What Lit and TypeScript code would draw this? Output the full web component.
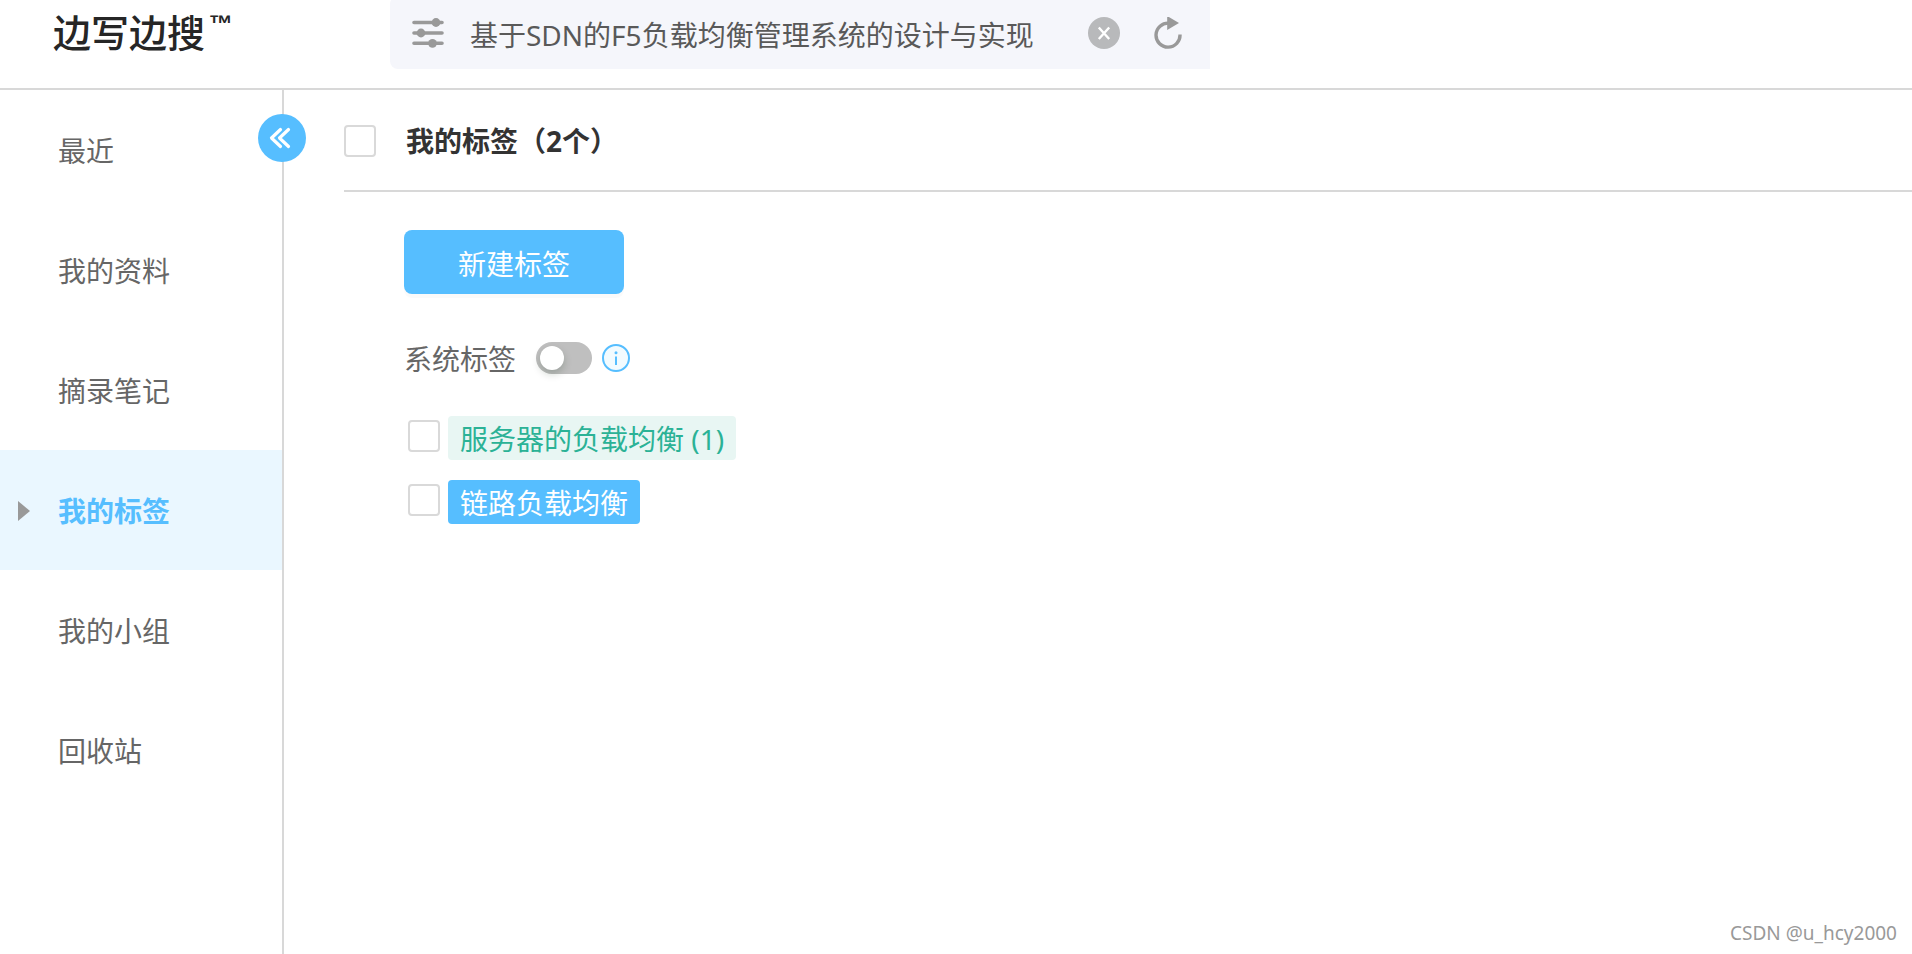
import { LitElement, html, css, svg } from "lit";
import { customElement, state } from "lit/decorators.js";

interface Tag {
  id: string;
  label: string;
  tone: "green" | "blue";
}

@customElement("app-root")
export class AppRoot extends LitElement {
  static styles = css`
    :host {
      display: flex;
      flex-direction: column;
      min-height: 100vh;
      background: #fff;
      color: #595959;
      font-family: "Noto Sans", "Noto Sans CJK SC", sans-serif;
      font-size: 28px;
      line-height: 40px;
    }
    * {
      box-sizing: border-box;
    }
    svg {
      display: block;
    }
    button {
      border: 0;
      padding: 0;
      background: none;
      font: inherit;
      color: inherit;
      cursor: pointer;
    }
    .top {
      display: flex;
      align-items: flex-start;
      height: 90px;
      border-bottom: 2px solid #d8d8d8;
    }
    .logo {
      display: flex;
      align-items: flex-start;
      gap: 4px;
      width: 390px;
      flex: none;
      margin: 0;
      padding: 8px 0 0 53px;
      color: #262626;
      font-size: 38px;
      line-height: 48px;
      font-weight: 500;
    }
    .logo sup {
      font-family: "Liberation Sans", sans-serif;
      font-size: 24px;
      line-height: 32px;
      font-weight: 700;
    }
    .search {
      display: flex;
      align-items: center;
      width: 820px;
      height: 73px;
      margin-top: -4px;
      padding: 0 28px 0 22px;
      background: #f5f6fb;
      border-radius: 8px 0 0 8px;
    }
    .search input {
      flex: 1;
      min-width: 0;
      height: 48px;
      margin-left: 26px;
      padding: 2px 0 0;
      border: 0;
      outline: 0;
      background: none;
      color: #595959;
      font: inherit;
    }
    .clear {
      margin-right: 34px;
    }
    .body {
      display: flex;
      flex: 1;
    }
    .side {
      position: relative;
      flex: none;
      width: 284px;
      border-right: 2px solid #d8d8d8;
    }
    .side a {
      display: flex;
      align-items: center;
      height: 120px;
      padding: 2px 0 0 18px;
      color: #666;
      text-decoration: none;
    }
    .side .mark {
      width: 40px;
    }
    .side a.active {
      background: #eaf7ff;
      color: #56beff;
      font-weight: 700;
    }
    .fold {
      position: absolute;
      top: 24px;
      right: -24px;
      width: 48px;
      height: 48px;
      border-radius: 50%;
      background: #56beff;
    }
    .main {
      flex: 1;
      min-width: 0;
      padding-left: 60px;
    }
    .box {
      appearance: none;
      flex: none;
      width: 32px;
      height: 32px;
      margin: 0;
      border: 2px solid #d9d9d9;
      border-radius: 4px;
      background: #fff;
    }
    .box:checked {
      border-color: #56beff;
      background: #56beff;
    }
    .heading {
      display: flex;
      align-items: center;
      gap: 30px;
      height: 102px;
      padding-top: 2px;
      border-bottom: 2px solid #d8d8d8;
    }
    .heading label {
      color: #333;
      font-weight: 700;
    }
    .content {
      display: flex;
      flex-direction: column;
      align-items: flex-start;
      padding: 38px 60px 60px;
    }
    .create {
      width: 220px;
      height: 64px;
      border-radius: 8px;
      background: #56beff;
      color: #fff;
      padding-top: 4px;
      box-shadow: 0 4px 0 rgba(0, 0, 0, 0.02);
    }
    .system {
      display: flex;
      align-items: center;
      height: 48px;
      margin: 40px 0 34px;
      color: #666;
    }
    .system label {
      padding-top: 2px;
    }
    .switch {
      appearance: none;
      width: 56px;
      height: 32px;
      margin: 0 10px 0 20px;
      padding: 4px;
      border-radius: 16px;
      background: #bfbfbf;
      cursor: pointer;
    }
    .switch::before {
      content: "";
      display: block;
      width: 24px;
      height: 24px;
      border-radius: 50%;
      background: #fff;
      box-shadow: 0 4px 8px rgba(0, 35, 11, 0.2);
    }
    .switch:checked {
      background: #56beff;
    }
    .switch:checked::before {
      margin-left: 24px;
    }
    .tags {
      display: flex;
      flex-direction: column;
      gap: 20px;
      margin: 0;
      padding: 0 0 0 4px;
      list-style: none;
    }
    .tags li {
      display: flex;
      align-items: center;
      gap: 8px;
    }
    .tags .box {
      margin-bottom: 4px;
    }
    .tag {
      height: 44px;
      padding: 3px 12px 0;
      border-radius: 4px;
    }
    .green {
      background: #e8f6f3;
      color: #2bb296;
    }
    .blue {
      background: #56beff;
      color: #fff;
    }
    .credit {
      position: absolute;
      right: 15px;
      bottom: 7px;
      color: #999;
      font-size: 19px;
      line-height: 28px;
    }
  `;

  @state() private query = "基于SDN的F5负载均衡管理系统的设计与实现";
  @state() private current = "我的标签";

  private sections = ["最近", "我的资料", "摘录笔记", "我的标签", "我的小组", "回收站"];

  private tags: Tag[] = [
    { id: "server", label: "服务器的负载均衡 (1)", tone: "green" },
    { id: "link", label: "链路负载均衡", tone: "blue" },
  ];

  private marker = svg`<svg width="12" height="20" viewBox="0 0 12 20"><path d="M0 0L12 10L0 20Z" fill="#999"/></svg>`;

  private renderTop() {
    return html`
      <header class="top">
        <h1 class="logo">边写边搜<sup>™</sup></h1>
        <div class="search">
          <svg width="32" height="32" viewBox="0 0 32 32" fill="#999" aria-hidden="true">
            <path d="M2 5.500H30M2 16H30M2 26.300H30" stroke="#999" stroke-width="3.600" stroke-linecap="round" />
            <circle cx="24" cy="5.500" r="4.400" />
            <circle cx="9" cy="16" r="4.400" />
            <circle cx="20.500" cy="26.300" r="4.400" />
          </svg>
          <input
            type="text"
            aria-label="搜索"
            .value=${this.query}
            @input=${(e: InputEvent) => (this.query = (e.target as HTMLInputElement).value)}
          />
          <button class="clear" aria-label="清除" @click=${() => (this.query = "")}>
            <svg width="32" height="32" viewBox="0 0 32 32">
              <circle cx="16" cy="16" r="16" fill="#b8b9bb" />
              <path d="M10.800 10.500L21.200 22M21.200 10.500L10.800 22" stroke="#fff" stroke-width="2.400" />
            </svg>
          </button>
          <button aria-label="刷新">
            <svg width="28" height="32" viewBox="0 0 28 32">
              <path d="M15 6.200A12 12 0 1 0 26 17.500" fill="none" stroke="#999" stroke-width="3.400" />
              <path d="M13.200 -1L25 6L13.200 13Z" fill="#999" />
            </svg>
          </button>
        </div>
      </header>
    `;
  }

  private renderSide() {
    return html`
      <nav class="side">
        ${this.sections.map(
          (name) => html`
            <a
              href="#"
              class=${name === this.current ? "active" : ""}
              @click=${() => (this.current = name)}
              ><span class="mark">${name === this.current ? this.marker : ""}</span>${name}</a
            >
          `
        )}
        <button class="fold" aria-label="收起">
          <svg width="48" height="48" viewBox="0 0 48 48" fill="none" stroke="#fff" stroke-width="3.200" stroke-linecap="round" stroke-linejoin="round">
            <path d="M22.500 15.500L13.500 24L22.500 32.500M30.500 15.500L21.500 24L30.500 32.500" />
          </svg>
        </button>
      </nav>
    `;
  }

  render() {
    return html`
      ${this.renderTop()}
      <div class="body">
        ${this.renderSide()}
        <main class="main">
          <div class="heading">
            <input class="box" type="checkbox" id="all" />
            <label for="all">我的标签（2个）</label>
          </div>
          <div class="content">
            <button class="create">新建标签</button>
            <div class="system">
              <label for="system">系统标签</label>
              <input class="switch" type="checkbox" role="switch" id="system" />
              <button aria-label="说明">
                <svg width="28" height="28" viewBox="0 0 28 28">
                  <circle cx="14" cy="14" r="13" fill="#f2fbff" stroke="#56beff" stroke-width="2" />
                  <path d="M14 12.500V21" stroke="#56beff" stroke-width="2" />
                  <circle cx="14" cy="8.700" r="1.500" fill="#56beff" />
                </svg>
              </button>
            </div>
            <ul class="tags">
              ${this.tags.map(
                (tag) => html`
                  <li>
                    <input class="box" type="checkbox" id=${tag.id} />
                    <label class="tag ${tag.tone}" for=${tag.id}>${tag.label}</label>
                  </li>
                `
              )}
            </ul>
          </div>
        </main>
      </div>
      <div class="credit">CSDN @u_hcy2000</div>
    `;
  }
}
